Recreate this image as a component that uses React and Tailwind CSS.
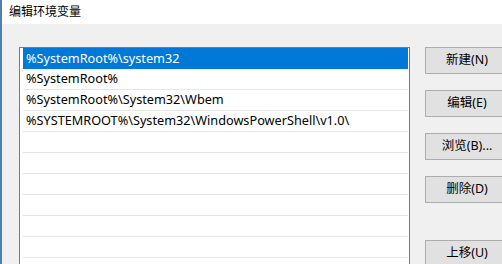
import React from "react";

const rows = [
  "%SystemRoot%\\system32",
  "%SystemRoot%",
  "%SystemRoot%\\System32\\Wbem",
  "%SYSTEMROOT%\\System32\\WindowsPowerShell\\v1.0\\",
  "", "", "", "", "", "", "", "", "",
];

const buttons = [
  { label: "新建(N)", mt: "mt-0" },
  { label: "编辑(E)", mt: "mt-[16px]" },
  { label: "浏览(B)...", mt: "mt-[16px]" },
  { label: "删除(D)", mt: "mt-[16px]" },
  { label: "上移(U)", mt: "mt-[37px]" },
];

export default function App() {
  return (
    <div
      className="w-[502px] h-[264px] overflow-hidden bg-[#f0f0f0] border-l-2 border-[#4f7fae] text-black"
      style={{ fontFamily: '"Segoe UI", "Noto Sans", "Noto Sans CJK SC", sans-serif' }}
    >
      <div className="h-[24px] bg-white flex items-center pl-[7px] text-[12px] leading-none">
        编辑环境变量
      </div>
      <div className="flex pl-[17px] pt-[23px]">
        <div className="w-[391px] h-[240px] shrink-0 bg-white border border-[#7a7a7a] pl-[3px] pr-[1px]">
          {rows.map((r, i) => (
            <div
              key={i}
              className={
                i === 0
                  ? "h-[21px] bg-[#0078d7] text-white flex items-center pl-[3px] text-[12.7px] whitespace-nowrap"
                  : "h-[21px] border-b border-[#e6e6e6] flex items-center pl-[3px] text-[12.7px] whitespace-nowrap"
              }
            >
              {r}
            </div>
          ))}
        </div>
        <div className="ml-[15px] flex flex-col shrink-0">
          {buttons.map((b) => (
            <div
              key={b.label}
              className={`${b.mt} w-[84px] h-[27px] bg-[#e1e1e1] border border-[#adadad] flex items-center justify-center text-[12.5px]`}
            >
              {b.label}
            </div>
          ))}
        </div>
      </div>
    </div>
  );
}
